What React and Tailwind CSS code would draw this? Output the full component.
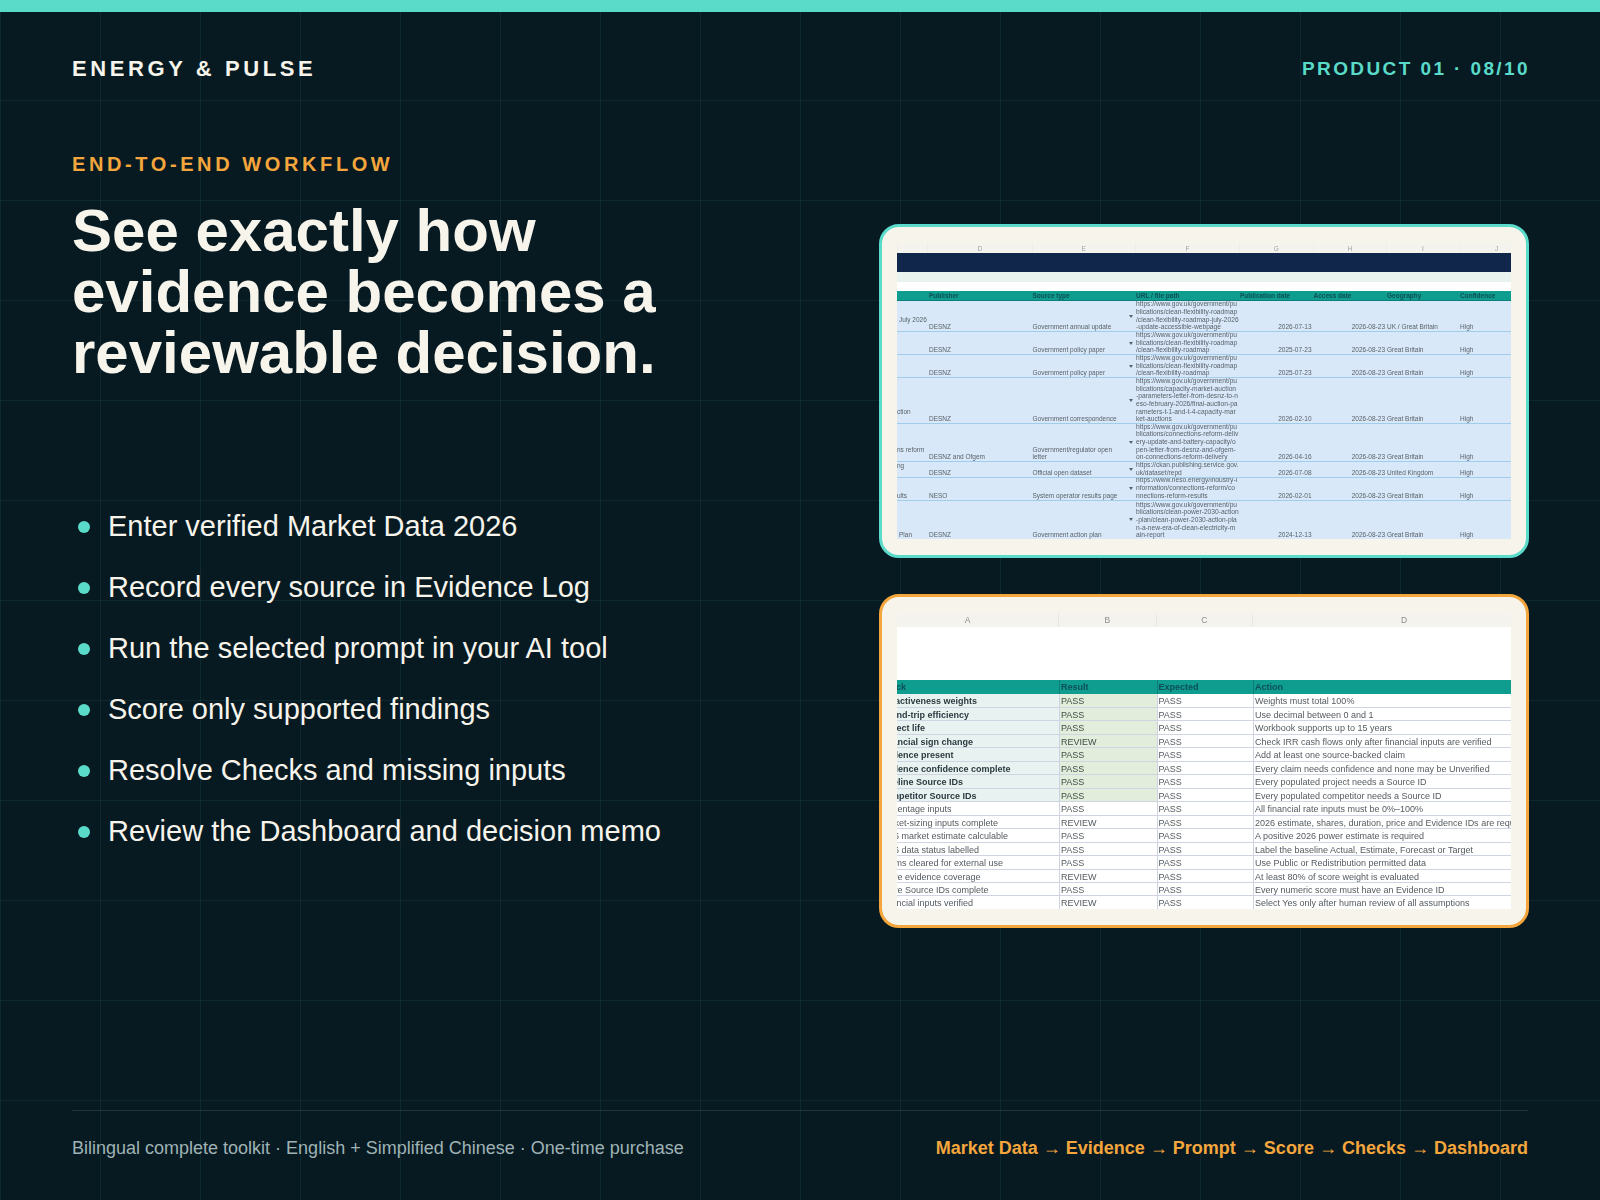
const bullets = [
  'Enter verified Market Data 2026',
  'Record every source in Evidence Log',
  'Run the selected prompt in your AI tool',
  'Score only supported findings',
  'Resolve Checks and missing inputs',
  'Review the Dashboard and decision memo',
];

const flow = ['Market Data', 'Evidence', 'Prompt', 'Score', 'Checks', 'Dashboard'];

const gov = 'https://www.gov.uk/government/pu';
const roadmap = 'blications/clean-flexibility-roadmap';

const sources = [
  { h: 'h-[31px]', lead: 'July 2026', leadCls: 'pl-[2px] pb-[7px]', pub: 'DESNZ', type: ['Government annual update'], url: [gov, roadmap, '/clean-flexibility-roadmap-july-2026', '-update-accessible-webpage'], pubDate: '2026-07-13', geo: 'UK / Great Britain' },
  { h: 'h-[23px]', lead: '', leadCls: '', pub: 'DESNZ', type: ['Government policy paper'], url: [gov, roadmap, '/clean-flexibility-roadmap'], pubDate: '2025-07-23', geo: 'Great Britain' },
  { h: 'h-[23px]', lead: '', leadCls: '', pub: 'DESNZ', type: ['Government policy paper'], url: [gov, roadmap, '/clean-flexibility-roadmap'], pubDate: '2025-07-23', geo: 'Great Britain' },
  { h: 'h-[46px]', lead: 'ction', leadCls: 'pb-[7px]', pub: 'DESNZ', type: ['Government correspondence'], url: [gov, 'blications/capacity-market-auction', '-parameters-letter-from-desnz-to-n', 'eso-february-2026/final-auction-pa', 'rameters-t-1-and-t-4-capacity-mar', 'ket-auctions'], pubDate: '2026-02-10', geo: 'Great Britain' },
  { h: 'h-[38px]', lead: 'ns reform', leadCls: 'pb-[7px]', pub: 'DESNZ and Ofgem', type: ['Government/regulator open', 'letter'], url: [gov, 'blications/connections-reform-deliv', 'ery-update-and-battery-capacity/o', 'pen-letter-from-desnz-and-ofgem-', 'on-connections-reform-delivery'], pubDate: '2026-04-16', geo: 'Great Britain' },
  { h: 'h-[15.5px]', lead: 'ng', leadCls: 'pb-[7px]', pub: 'DESNZ', type: ['Official open dataset'], url: ['https://ckan.publishing.service.gov.', 'uk/dataset/repd'], pubDate: '2026-07-08', geo: 'United Kingdom' },
  { h: 'h-[23px]', lead: 'ults', leadCls: '', pub: 'NESO', type: ['System operator results page'], url: ['https://www.neso.energy/industry-i', 'nformation/connections-reform/co', 'nnections-reform-results'], pubDate: '2026-02-01', geo: 'Great Britain' },
  { h: 'h-[38.5px]', lead: 'Plan', leadCls: 'pl-[2px]', pub: 'DESNZ', type: ['Government action plan'], url: [gov, 'blications/clean-power-2030-action', '-plan/clean-power-2030-action-pla', 'n-a-new-era-of-clean-electricity-m', 'ain-report'], pubDate: '2024-12-13', geo: 'Great Britain', last: true },
];

const checks = [
  ['Attractiveness weights', 'PASS', 'Weights must total 100%'],
  ['Round-trip efficiency', 'PASS', 'Use decimal between 0 and 1'],
  ['Project life', 'PASS', 'Workbook supports up to 15 years'],
  ['Financial sign change', 'REVIEW', 'Check IRR cash flows only after financial inputs are verified'],
  ['Evidence present', 'PASS', 'Add at least one source-backed claim'],
  ['Evidence confidence complete', 'PASS', 'Every claim needs confidence and none may be Unverified'],
  ['Pipeline Source IDs', 'PASS', 'Every populated project needs a Source ID'],
  ['Competitor Source IDs', 'PASS', 'Every populated competitor needs a Source ID'],
  ['Percentage inputs', 'PASS', 'All financial rate inputs must be 0%–100%'],
  ['Market-sizing inputs complete', 'REVIEW', '2026 estimate, shares, duration, price and Evidence IDs are required'],
  ['2026 market estimate calculable', 'PASS', 'A positive 2026 power estimate is required'],
  ['2026 data status labelled', 'PASS', 'Label the baseline Actual, Estimate, Forecast or Target'],
  ['Claims cleared for external use', 'PASS', 'Use Public or Redistribution permitted data'],
  ['Score evidence coverage', 'REVIEW', 'At least 80% of score weight is evaluated'],
  ['Score Source IDs complete', 'PASS', 'Every numeric score must have an Evidence ID'],
  ['Financial inputs verified', 'REVIEW', 'Select Yes only after human review of all assumptions'],
];

const sourceCols = 'grid grid-cols-[30px_104.5px_103.5px_104px_73.5px_73.5px_73px_52px]';
// rows are shorter than the text's line box, so the grid track has to be held to the row height
const checkCols = 'grid grid-cols-[162px_97.5px_96.5px_258px] grid-rows-[minmax(0,1fr)]';

function EvidenceSheet() {
  return (
    <div className="flex flex-col text-[6.5px] leading-[7.67px] text-[#59626a] blur-[0.25px]">
      <div className={`${sourceCols} h-[10px] text-[#a0a3a3] text-center`}>
        {['', 'D', 'E', 'F', 'G', 'H', 'I'].map((c, i) => (
          <div key={i} className="border-l border-[#f0ede6] bg-[#f5f3ed] leading-[11px]">{c}</div>
        ))}
        <div className="border-l border-[#f0ede6] bg-[#f5f3ed] leading-[11px] pl-[22px]">J</div>
      </div>
      <div className="h-[19px] bg-[#10264a]" />
      <div className="h-[10px] bg-[#e8f3f0]" />
      <div className="h-[9px] bg-white" />
      <div className={`${sourceCols} h-[10px] bg-[#0f9d8f] font-bold text-[#0c4f56] leading-[10px] border-b border-[#0b7f78]`}>
        <div />
        <div className="pl-[2px]">Publisher</div>
        <div className="pl-[1px]">Source type</div>
        <div className="pl-[1px]">URL / file path</div>
        <div className="pl-[1px]">Publication date</div>
        <div className="pl-[1px]">Access date</div>
        <div className="pl-[1px]">Geography</div>
        <div className="pl-[1px]">Confidence</div>
      </div>
      {sources.map((row, i) => (
        <div key={i} className={`${sourceCols} ${row.h} bg-[#d8e8f8] ${row.last ? '' : 'border-b border-[#9fcdeb]'}`}>
          <div className={`flex items-end whitespace-nowrap ${row.leadCls}`}>{row.lead}</div>
          <div className="flex items-end pl-[2px] whitespace-nowrap">{row.pub}</div>
          <div className="flex justify-between pl-[1px] pr-[2px]">
            <div className="self-end">
              {row.type.map((t) => <div key={t} className="whitespace-nowrap">{t}</div>)}
            </div>
            <div className="self-center w-0 h-0 border-x-[2px] border-t-[3px] border-x-transparent border-t-[#59626a]" />
          </div>
          <div className="flex flex-col justify-end pl-[1px] overflow-hidden text-[6.65px]">
            {row.url.map((line, n) => <div key={n} className="whitespace-nowrap">{line}</div>)}
          </div>
          <div className="flex items-end justify-end pr-[1px]">{row.pubDate}</div>
          <div className="flex items-end justify-end pr-[1px]">2026-08-23</div>
          <div className="flex items-end pl-[1px] whitespace-nowrap">{row.geo}</div>
          <div className="flex items-end pl-[1px]">High</div>
        </div>
      ))}
    </div>
  );
}

function ChecksSheet() {
  return (
    <div className="flex flex-col text-[9px] leading-[14px] text-[#555b60] blur-[0.25px]">
      <div className={`${checkCols} h-[14px] text-[8.5px] text-[#8a8d8d] text-center bg-[#f5f3ed]`}>
        <div className="border-r border-[#e8e6df] pr-[20px]">A</div>
        <div className="border-r border-[#e8e6df]">B</div>
        <div className="border-r border-[#e8e6df]">C</div>
        <div className="pl-[44px]">D</div>
      </div>
      <div className="h-[53px] bg-white" />
      <div className={`${checkCols} h-[14px] bg-[#0f9d8f] font-bold text-[#0c4f56]`}>
        <div className="overflow-hidden whitespace-nowrap"><span className="block -ml-[18px]">Check</span></div>
        <div className="pl-[1px] border-l border-[#0b7f78]">Result</div>
        <div className="pl-[1px] border-l border-[#0b7f78]">Expected</div>
        <div className="pl-[1px] border-l border-[#0b7f78]">Action</div>
      </div>
      {checks.map(([name, result, action], i) => {
        const line = i === checks.length - 1 ? '' : 'border-b';
        return (
          <div key={name} className={`${checkCols} ${i % 2 === 0 && i < 14 ? 'h-[14px]' : 'h-[13px]'} bg-white`}>
            <div className={`overflow-hidden whitespace-nowrap border-[#cfd4e3] ${line} ${i < 8 ? 'bg-[#e8f3f1] font-bold text-[#2c3a40]' : ''}`}>
              <span className="block -ml-[18px]">{name}</span>
            </div>
            <div className={`pl-[1px] border-l border-[#cfd4e3] ${line} ${i < 8 ? 'bg-[#e2eedb] text-[#3f4d48]' : ''}`}>{result}</div>
            <div className={`pl-[1px] border-l border-[#cfd4e3] ${line}`}>PASS</div>
            <div className={`pl-[1px] border-l border-[#cfd4e3] overflow-hidden whitespace-nowrap ${line}`}>{action}</div>
          </div>
        );
      })}
    </div>
  );
}

export default function App() {
  return (
    <div className="w-[1600px] h-[1200px] flex flex-col overflow-hidden bg-[#071a22] bg-[linear-gradient(to_right,rgba(90,219,201,0.08)_1px,transparent_1px),linear-gradient(to_bottom,rgba(90,219,201,0.08)_1px,transparent_1px)] bg-[size:100px_100px] font-['Liberation_Sans',Arial,sans-serif] text-[#f7f4ec]">
      <div className="h-3 bg-[#5adbc9]" />

      <header className="flex justify-between items-center px-[72px] pt-[42px]">
        <div className="text-[22px] leading-[28px] font-bold tracking-[3.6px]">ENERGY &amp; PULSE</div>
        <div className="text-[19px] leading-[30px] font-bold tracking-[2.4px] -mr-[2px] text-[#5adbc9]">PRODUCT 01 · 08/10</div>
      </header>

      <main className="flex-1 flex justify-between pl-[71px] pr-[71px]">
        <div className="pl-[1px]">
          <div className="mt-[68px] text-[20px] leading-[24px] font-bold tracking-[3.6px] text-[#f4a63c]">END-TO-END WORKFLOW</div>
          <h1 className="mt-[24px] text-[60px] leading-[61px] font-bold">
            See exactly how<br />evidence becomes a<br />reviewable decision.
          </h1>
          <ul className="mt-[126px] flex flex-col gap-[26px]">
            {bullets.map((b) => (
              <li key={b} className="flex items-center gap-[18px] text-[29px] leading-[35px]">
                <span className="ml-[6px] w-3 h-3 rounded-full bg-[#5adbc9]" />
                {b}
              </li>
            ))}
          </ul>
        </div>

        <div className="w-[650px] pt-[140px] flex flex-col gap-[36px]">
          <div className="h-[334px] rounded-[20px] border-[3px] border-[#5adbc9] bg-[#f7f4ec] px-[15px] pt-[16px] overflow-hidden">
            <EvidenceSheet />
          </div>
          <div className="h-[334px] rounded-[20px] border-[3px] border-[#f4a63c] bg-[#f7f4ec] px-[15px] pt-[16px] overflow-hidden">
            <ChecksSheet />
          </div>
        </div>
      </main>

      <footer className="mx-[72px] h-[90px] pb-[14px] border-t border-[#1f353c] flex justify-between items-center text-[18px]">
        <div className="text-[#9fb3b5]">Bilingual complete toolkit · English + Simplified Chinese · One-time purchase</div>
        <div className="font-bold text-[#f4a63c]">
          {flow.map((step, i) => (
            <span key={step}>
              {i > 0 && <span className="font-normal"> → </span>}
              {step}
            </span>
          ))}
        </div>
      </footer>
    </div>
  );
}
